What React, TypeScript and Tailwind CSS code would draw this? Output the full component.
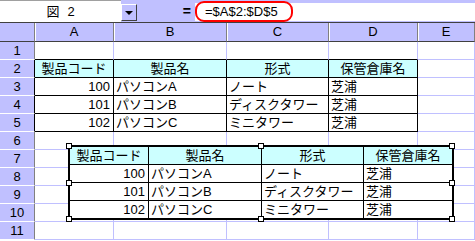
import React from "react";

const LAV = "bg-[#c0c0ff]";

const header = ["製品コード", "製品名", "形式", "保管倉庫名"];
const products = [
  ["100", "パソコンA", "ノート", "芝浦"],
  ["101", "パソコンB", "ディスクタワー", "芝浦"],
  ["102", "パソコンC", "ミニタワー", "芝浦"],
];

function cellText(r: number, c: number) {
  if (c > 3) return null;
  if (r === 2) return header[c];
  if (r >= 3 && r <= 5) return products[r - 3][c];
  return null;
}

function SheetCell({ r, c }: { r: number; c: number }) {
  const inTable = c <= 3 && r >= 2 && r <= 5;
  const aboveTable = c <= 3 && r === 1;
  const text = cellText(r, c);
  const border = inTable
    ? "border-r border-b border-black"
    : aboveTable
    ? "border-r border-r-[#c0c0ff] border-b border-b-black"
    : "border-r border-b border-[#c0c0ff]";
  const bg = r === 2 && c <= 3 ? "bg-[#ccffff]" : "bg-white";
  const align = r === 2 ? "text-center" : c === 0 ? "text-right pr-[3px]" : "text-left pl-[2px]";
  return (
    <div className={`h-[18px] leading-[18px] overflow-hidden whitespace-nowrap ${border} ${bg} ${align}`}>
      {text}
    </div>
  );
}

function Handle({ x, y }: { x: number; y: number }) {
  return (
    <div
      className="absolute w-[6px] h-[6px] bg-white border border-black"
      style={{ left: x, top: y }}
    />
  );
}

export default function App() {
  const sheetRows = Array.from({ length: 11 }, (_, i) => i + 1);

  return (
    <div className="relative w-[475px] h-[241px] overflow-hidden bg-white text-[13px] text-black font-['Liberation_Sans','Noto_Sans_CJK_JP',sans-serif]">
      {/* name box + formula bar */}
      <div className={`flex h-[23px] ${LAV} border-b border-b-[#404040]`}>
        <div className="w-[121px] h-[22px] bg-white border-t border-t-[#a0a0a0] flex items-center justify-center gap-[8px] pt-[1px]">
          <span>図</span>
          <span>2</span>
        </div>
        <div className={`mt-[4px] w-[16px] h-[17px] ${LAV} border border-t-white border-l-white border-r-[#404040] border-b-[#404040] flex items-center justify-center`}>
          <div className="w-0 h-0 border-l-[4px] border-r-[4px] border-t-[4px] border-l-transparent border-r-transparent border-t-black" />
        </div>
        <div className="w-[58px] flex items-center justify-end pr-[4px] font-bold text-[14px]">=</div>
        <div className="flex-1 flex mt-[3px] h-[18px] bg-white">
          <div className="-mt-[2px] h-[21px] w-[98px] border-2 border-[#ff0000] rounded-[9px] flex items-center pl-[8px] bg-white">
            =$A$2:$D$5
          </div>
        </div>
      </div>

      {/* worksheet */}
      <div className="grid grid-cols-[35px_79px_113px_102px_89px_1fr]">
        <div className={`h-[19px] ${LAV} border-r border-r-[#808080] border-b border-b-[#404040]`} />
        {["A", "B", "C", "D", "E"].map((col) => (
          <div
            key={col}
            className={`h-[19px] leading-[18px] text-center ${LAV} border-r border-r-[#808080] border-b border-b-[#404040] shadow-[inset_1px_0_0_#ffffff]`}
          >
            {col}
          </div>
        ))}
        {sheetRows.map((r) => (
          <React.Fragment key={r}>
            <div
              className={`h-[18px] leading-[18px] text-center ${LAV} border-r border-b border-b-white ${
                r >= 2 && r <= 5 ? "border-r-black" : "border-r-[#808080]"
              }`}
            >
              {r}
            </div>
            {[0, 1, 2, 3, 4].map((c) => (
              <SheetCell key={c} r={r} c={c} />
            ))}
          </React.Fragment>
        ))}
      </div>

      {/* linked picture of A2:D5 */}
      <div className="absolute left-[68px] top-[145px] border-2 border-black bg-white">
        <div className="grid grid-cols-[79px_113px_102px_88px]">
          {[header, ...products].map((row, ri) =>
            row.map((val, ci) => (
              <div
                key={`${ri}-${ci}`}
                className={`leading-[18px] overflow-hidden whitespace-nowrap ${
                  ri < 3 ? "h-[18px] border-b border-black" : "h-[17px]"
                } ${ci < 3 ? "border-r border-black" : ""} ${
                  ri === 0 ? "bg-[#ccffff] text-center" : ci === 0 ? "text-right pr-[3px]" : "pl-[2px]"
                }`}
              >
                {val}
              </div>
            ))
          )}
        </div>
      </div>
      <Handle x={66} y={143} />
      <Handle x={258} y={143} />
      <Handle x={449} y={143} />
      <Handle x={66} y={180} />
      <Handle x={449} y={180} />
      <Handle x={66} y={216} />
      <Handle x={258} y={216} />
      <Handle x={449} y={216} />
    </div>
  );
}
